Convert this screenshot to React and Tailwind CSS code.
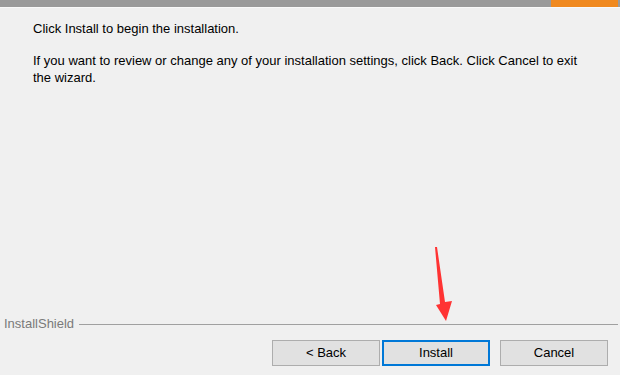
import React from "react";

const FONT = { fontFamily: '"Liberation Sans", Arial, sans-serif' };

const BTN =
  "h-[26px] w-[108px] bg-[#e1e1e1] text-[13px] text-black flex items-center justify-center";

export default function App() {
  return (
    <div
      className="relative w-[620px] h-[375px] bg-[#f0f0f0] flex flex-col overflow-hidden"
      style={FONT}
    >
      {/* TOP BAR */}
      <div className="flex h-[7px] bg-[#9a9a9a]">
        <div className="flex-1" />
        <div className="w-[67px] bg-[#f0891f]" />
        <div className="w-[2px]" />
      </div>
      <div className="h-[1px] bg-[#f9f9f9]" />

      {/* BODY */}
      <div className="flex-1 pl-[33px] pt-[12px] text-[13px] leading-[17px] text-black">
        <p>Click Install to begin the installation.</p>
        <p className="mt-[15px] w-[555px]">
          If you want to review or change any of your installation settings,
          click Back. Click Cancel to exit the wizard.
        </p>
      </div>

      {/* FOOTER */}
      <div className="flex items-center pl-[4px] pr-[2px]">
        <span className="text-[13px] text-[#7a7a7a] leading-[14px]">
          InstallShield
        </span>
        <div className="flex-1 h-[1px] bg-[#a0a0a0] ml-[5px]" />
      </div>
      <div className="flex items-center pl-[272px] pt-[9px] pb-[9px]">
        <button className={`${BTN} border border-[#adadad]`}>&lt; Back</button>
        <button className={`${BTN} ml-[2px] border-2 border-[#0078d7]`}>
          Install
        </button>
        <button className={`${BTN} ml-[10px] border border-[#adadad]`}>
          Cancel
        </button>
      </div>

      {/* ANNOTATION ARROW */}
      <svg
        className="absolute left-0 top-0 pointer-events-none"
        width="620"
        height="375"
      >
        <polygon
          points="435,247 437,247 445,302 452,301 446,321 436,305 440,304"
          fill="#ff3333"
        />
      </svg>
    </div>
  );
}
